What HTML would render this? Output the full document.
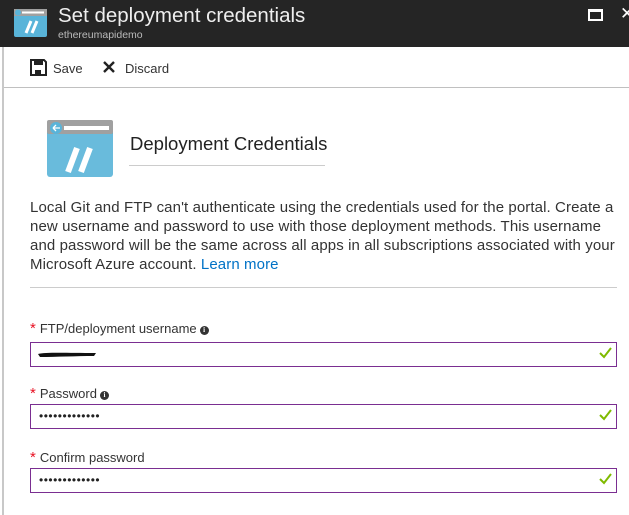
<!DOCTYPE html>
<html><head><style>
body{margin:0;width:629px;height:515px;overflow:hidden;background:#fff;font-family:"Liberation Sans",sans-serif;position:relative}
.hdr{position:absolute;left:0;top:0;width:629px;height:47px;background:#252525}
.abs{position:absolute}
.lbl{position:absolute;left:30px;font-size:13px;color:#333}
.lbl .s{color:#e81123;font-size:15px;margin-right:4px}
.box{position:absolute;left:30px;width:585px;height:23px;border:1px solid #7a2e91}
.chk{position:absolute;right:4px;top:3px}
.dots{position:absolute;left:8px;top:4px;font-size:12px;letter-spacing:0.5px;color:#222}
.info{display:inline-block;width:9px;height:9px;border-radius:50%;background:#333;color:#fff;font-size:7px;font-weight:bold;text-align:center;line-height:9px;margin-left:3px;vertical-align:1px;font-family:"Liberation Serif",serif}
p{margin:0}
.txt{position:absolute;left:30px;top:198px;font-size:15px;letter-spacing:0.1px;line-height:19px;color:#333;white-space:nowrap}
</style></head><body>
<div class="hdr">
<svg class="abs" style="left:14px;top:9px" width="33" height="28" viewBox="0 0 33 28"><rect width="33" height="28" rx="2" fill="#59b4d9"/><rect width="33" height="7" fill="#a0a0a0"/><circle cx="4" cy="3.5" r="3" fill="#59b4d9"/><rect x="8" y="2.5" width="22" height="2" fill="#fff"/><path d="M12 24 L17 12 M18 24 L23 12" stroke="#fff" stroke-width="3"/></svg>
<div class="abs" style="left:58px;top:4px;font-size:20.5px;color:#eee">Set deployment credentials</div>
<div class="abs" style="left:58px;top:29px;font-size:10.5px;color:#bbb">ethereumapidemo</div>
<div class="abs" style="left:588px;top:9px;width:11px;height:7px;border:2px solid #fff;border-top-width:3px"></div>
<div class="abs" style="left:620px;top:4px;font-size:17px;color:#fff">✕</div>
</div>
<div class="abs" style="left:2px;top:47px;width:2px;height:468px;background:#c8c8c8"></div>
<svg class="abs" style="left:30px;top:59px" width="17" height="17" viewBox="0 0 17 17"><path d="M1 1H14L16 3V16H1Z" fill="none" stroke="#222" stroke-width="2"/><rect x="4" y="2" width="9" height="4" fill="#222"/><rect x="5" y="11" width="6" height="5" fill="#222"/></svg>
<div class="abs" style="left:53px;top:61px;font-size:13px;color:#333">Save</div>
<svg class="abs" style="left:103px;top:61px" width="12" height="12"><path d="M1 1L11 11M11 1L1 11" stroke="#222" stroke-width="2.4"/></svg>
<div class="abs" style="left:125px;top:61px;font-size:13px;color:#333">Discard</div>
<div class="abs" style="left:4px;top:87px;width:625px;height:1px;background:#c0c0c0"></div>
<svg class="abs" style="left:47px;top:120px" width="66" height="57" viewBox="0 0 66 57"><rect width="66" height="57" rx="3" fill="#59b4d9"/><rect width="66" height="14" rx="2" fill="#a0a0a0"/><circle cx="9" cy="8" r="6" fill="#59b4d9"/><path d="M6 8h7M6 8l3-3M6 8l3 3" stroke="#fff" stroke-width="1.3" fill="none"/><rect x="17" y="6" width="45" height="4" fill="#fff"/><path d="M21 52L30 28M34 52L43 28" stroke="#fff" stroke-width="6"/><path d="M0 14H66V57H0Z" fill="#fff" opacity="0.1"/></svg>
<div class="abs" style="left:130px;top:133px;font-size:18.5px;color:#222">Deployment Credentials</div>
<div class="abs" style="left:129px;top:165px;width:196px;height:1px;background:#ccc"></div>
<div class="txt">
<p>Local Git and FTP can't authenticate using the credentials used for the portal. Create a</p>
<p>new username and password to use with those deployment methods. This username</p>
<p>and password will be the same across all apps in all subscriptions associated with your</p>
<p>Microsoft Azure account. <span style="color:#0072c6">Learn more</span></p>
</div>
<div class="abs" style="left:30px;top:287px;width:587px;height:1px;background:#ccc"></div>

<div class="lbl" style="top:320px"><span class="s">*</span>FTP/deployment username<span class="info">i</span></div>
<div class="box" style="top:342px"><svg class="abs" style="left:5px;top:6px" width="62" height="10"><path d="M2 5C10 3 30 4 60 4L58 7C40 7 20 8 4 8Z" fill="#111"/></svg><svg class="chk" width="13" height="13"><path d="M1 7L5 11L12 2" stroke="#7fba00" stroke-width="2" fill="none"/></svg></div>

<div class="lbl" style="top:385px"><span class="s">*</span>Password<span class="info">i</span></div>
<div class="box" style="top:404px"><span class="dots">•••••••••••••</span><svg class="chk" width="13" height="13"><path d="M1 7L5 11L12 2" stroke="#7fba00" stroke-width="2" fill="none"/></svg></div>

<div class="lbl" style="top:449px"><span class="s">*</span>Confirm password</div>
<div class="box" style="top:468px"><span class="dots">•••••••••••••</span><svg class="chk" width="13" height="13"><path d="M1 7L5 11L12 2" stroke="#7fba00" stroke-width="2" fill="none"/></svg></div>
</body></html>
